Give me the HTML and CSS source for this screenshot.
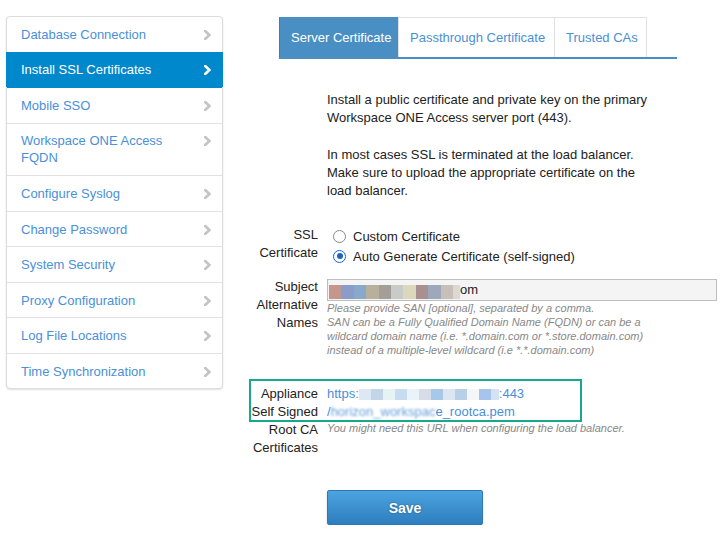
FILE: index.html
```html
<!DOCTYPE html>
<html lang="en">
<head>
<meta charset="utf-8">
<title>Install SSL Certificates</title>
<link rel="stylesheet" href="styles.css">
</head>
<body>
<div class="page">
  <nav class="sidebar">
    <a class="nav-item"><span class="nav-text">Database Connection</span><svg class="chev" viewBox="0 0 7 10"><polyline points="1.2,1 5.4,5 1.2,9"/></svg></a>
    <a class="nav-item active"><span class="nav-text">Install SSL Certificates</span><svg class="chev" viewBox="0 0 7 10"><polyline points="1.2,1 5.4,5 1.2,9"/></svg></a>
    <a class="nav-item"><span class="nav-text">Mobile SSO</span><svg class="chev" viewBox="0 0 7 10"><polyline points="1.2,1 5.4,5 1.2,9"/></svg></a>
    <a class="nav-item"><span class="nav-text">Workspace ONE Access<br>FQDN</span><svg class="chev" viewBox="0 0 7 10"><polyline points="1.2,1 5.4,5 1.2,9"/></svg></a>
    <a class="nav-item"><span class="nav-text">Configure Syslog</span><svg class="chev" viewBox="0 0 7 10"><polyline points="1.2,1 5.4,5 1.2,9"/></svg></a>
    <a class="nav-item"><span class="nav-text">Change Password</span><svg class="chev" viewBox="0 0 7 10"><polyline points="1.2,1 5.4,5 1.2,9"/></svg></a>
    <a class="nav-item"><span class="nav-text">System Security</span><svg class="chev" viewBox="0 0 7 10"><polyline points="1.2,1 5.4,5 1.2,9"/></svg></a>
    <a class="nav-item"><span class="nav-text">Proxy Configuration</span><svg class="chev" viewBox="0 0 7 10"><polyline points="1.2,1 5.4,5 1.2,9"/></svg></a>
    <a class="nav-item"><span class="nav-text">Log File Locations</span><svg class="chev" viewBox="0 0 7 10"><polyline points="1.2,1 5.4,5 1.2,9"/></svg></a>
    <a class="nav-item"><span class="nav-text">Time Synchronization</span><svg class="chev" viewBox="0 0 7 10"><polyline points="1.2,1 5.4,5 1.2,9"/></svg></a>
  </nav>

  <main class="main">
    <div class="tabs">
      <a class="tab tab-server active">Server Certificate</a>
      <a class="tab tab-pass">Passthrough Certificate</a>
      <a class="tab tab-trusted">Trusted CAs</a>
    </div>

    <div class="intro">
      <p>Install a public certificate and private key on the primary<br>Workspace ONE Access server port (443).</p>
      <p>In most cases SSL is terminated at the load balancer.<br>Make sure to upload the appropriate certificate on the<br>load balancer.</p>
    </div>

    <div class="form-row row-ssl">
      <div class="label">SSL<br>Certificate</div>
      <div class="value">
        <div class="radio-line"><span class="radio"></span>Custom Certificate</div>
        <div class="radio-line"><span class="radio checked"></span>Auto Generate Certificate (self-signed)</div>
      </div>
    </div>

    <div class="form-row row-san">
      <div class="label">Subject<br>Alternative<br>Names</div>
      <div class="value">
        <div class="text-input">
          <span class="mosaic m-san"><i class="c1"></i><i class="c2"></i><i class="c3"></i><i class="c4"></i><i class="c5"></i><i class="c6"></i><i class="c7"></i><i class="c8"></i><i class="c9"></i><i class="c10"></i><i class="c11"></i></span><span class="input-text">om</span>
        </div>
        <div class="help">Please provide SAN [optional], separated by a comma.<br>SAN can be a Fully Qualified Domain Name (FQDN) or can be a<br>wildcard domain name (i.e. *.domain.com or *.store.domain.com)<br>instead of a multiple-level wildcard (i.e *.*.domain.com)</div>
      </div>
    </div>

    <div class="form-row row-ca">
      <div class="label">Appliance<br>Self Signed<br>Root CA<br>Certificates</div>
      <div class="value">
        <a class="link">https:<span class="mosaic m-url"><i class="u1"></i><i class="u2"></i><i class="u3"></i><i class="u4"></i><i class="u5"></i><i class="u6"></i><i class="u7"></i><i class="u8"></i><i class="u9"></i><i class="u10"></i><i class="u11"></i><i class="u12"></i></span>:443</a>
        <a class="link">/<span class="blurred">horizon_workspac</span>e_rootca.pem</a>
        <div class="help">You might need this URL when configuring the load balancer.</div>
      </div>
      <div class="highlight"></div>
    </div>

    <div class="actions">
      <button class="btn-save" type="button">Save</button>
    </div>
  </main>
</div>
</body>
</html>
```

FILE: styles.css
```css
* { box-sizing: border-box; }

html, body {
  margin: 0;
  padding: 0;
  background: #fff;
}

body {
  font-family: "Liberation Sans", Arial, sans-serif;
  font-size: 13px;
  color: #333;
}

.page {
  display: flex;
  align-items: flex-start;
  padding: 16px 0 0 6px;
}

/* ---------- sidebar ---------- */
.sidebar {
  width: 217px;
  flex: none;
  display: flex;
  flex-direction: column;
  border: 1px solid #dcdcdc;
  border-radius: 4px;
  background: #fff;
  box-shadow: 0 1px 2px rgba(0, 0, 0, 0.12);
}

.nav-item {
  display: flex;
  justify-content: space-between;
  align-items: flex-start;
  padding: 8.85px 11px 8.7px 14px;
  line-height: 17px;
  color: #4a90d9;
  text-decoration: none;
  border-top: 1px solid #e2e2e2;
}

.nav-item:first-child {
  border-top: 0;
}

.nav-item.active {
  background: #0088cc;
  color: #fff;
  border-top-color: #0088cc;
  margin: 0 -1px;
  padding-left: 15px;
  padding-right: 12px;
  position: relative;
}

.nav-item.active + .nav-item {
  border-top-color: #0088cc;
}

.nav-text {
  flex: 1;
  white-space: nowrap;
}

.chev {
  flex: none;
  width: 7px;
  height: 10px;
  margin-top: 4px;
}

.chev polyline {
  fill: none;
  stroke: #c4c4c4;
  stroke-width: 2.6;
  stroke-linecap: square;
}

.nav-item.active .chev polyline {
  stroke: #fff;
}

/* ---------- main ---------- */
.main {
  margin-left: 26px;
  padding-top: 1px;
}

.tabs {
  display: flex;
  width: 398px;
  margin-left: 30px;
  border-bottom: 2px solid #4a8fc4;
}

.tab {
  height: 40px;
  display: flex;
  align-items: center;
  padding-left: 11px;
  color: #4a8fd6;
  border: 1px solid #e0e0e0;
  border-bottom: 0;
  border-right: 0;
  white-space: nowrap;
}

.tab-server { width: 119px; }
.tab-pass { width: 156px; }
.tab-trusted { width: 93px; border-right: 1px solid #e0e0e0; }

.tab.active {
  background: #4a8fc4;
  color: #fff;
  border-color: #4a8fc4;
  border-left-color: #3b7cb1;
}

.intro {
  margin: 32px 0 0 78px;
  line-height: 18px;
  color: #222;
}

.intro p {
  margin: 0;
  white-space: nowrap;
}

.intro p + p {
  margin-top: 19px;
}

/* ---------- form rows ---------- */
.form-row {
  display: grid;
  grid-template-columns: 69px 390px;
  column-gap: 9px;
}

.label {
  text-align: right;
  line-height: 18px;
  color: #222;
  white-space: nowrap;
}

.row-ssl { margin-top: 26px; }
.row-san { margin-top: 12px; }
.row-ca { margin-top: 28px; position: relative; }

.radio-line {
  display: flex;
  align-items: center;
  height: 20px;
  color: #222;
  white-space: nowrap;
}

.radio {
  width: 13px;
  height: 13px;
  margin: 0 7px 0 6px;
  border-radius: 50%;
  border: 1.5px solid #8a8a8a;
  background: #fff;
  display: flex;
  align-items: center;
  justify-content: center;
}

.radio.checked {
  border-color: #1d62c4;
}

.radio.checked::after {
  content: "";
  width: 6px;
  height: 6px;
  border-radius: 50%;
  background: #1d62c4;
}

.text-input {
  margin-top: 1px;
  height: 22px;
  border: 1px solid #bdbdbd;
  background: #f4f4f4;
  padding: 0 1px;
  display: flex;
  align-items: center;
  color: #222;
}

.mosaic {
  display: inline-flex;
}

.mosaic i {
  display: block;
  width: 12px;
}

.m-san {
  margin-top: 3px;
}

.m-san i {
  height: 14px;
  width: 12.4px;
}

.c1 { background: #c4968c; }
.c2 { background: #8c9cc8; }
.c3 { background: #88a8cc; }
.c4 { background: #b8b09c; }
.c5 { background: #a49e98; }
.c6 { background: #c8ccc8; }
.c7 { background: #dcd8bc; }
.c8 { background: #a89090; }
.c9 { background: #9ea8bc; }
.c10 { background: #c8c0b8; }
.c11 { background: #dcd8d4; width: 7px !important; }

.input-text {
  line-height: 18px;
}

.help {
  font-size: 11px;
  font-style: italic;
  line-height: 14px;
  color: #888;
  white-space: nowrap;
}

.link {
  display: block;
  line-height: 18px;
  color: #4a8fd6;
  text-decoration: none;
  white-space: nowrap;
}

.m-url {
  vertical-align: -2px;
}

.m-url i {
  height: 11px;
}

.u1 { background: #dce9f5; }
.u2 { background: #c5d5e8; }
.u3 { background: #e6f3f3; }
.u4 { background: #c8dcef; }
.u5 { background: #e8f3fa; }
.u6 { background: #d6dde8; }
.u7 { background: #a8c8e8; }
.u8 { background: #dce6f2; }
.u9 { background: #b8cfe8; }
.u10 { background: #f4f6f8; }
.u11 { background: #a6c4ec; }
.u12 { background: #d4e2f4; width: 8px !important; }

.blurred {
  filter: blur(1px);
  opacity: 0.85;
}

.highlight {
  position: absolute;
  left: 0;
  top: -6px;
  width: 333px;
  height: 43px;
  border: 2px solid #17a98b;
  pointer-events: none;
}

/* ---------- actions ---------- */
.actions {
  margin: 33px 0 0 78px;
}

.btn-save {
  width: 156px;
  height: 35px;
  border: 1px solid #2f78b5;
  border-radius: 2px;
  background: linear-gradient(#4ba4df, #2d7ebe);
  box-shadow: 0 1px 2px rgba(0, 0, 0, 0.2);
  color: #fff;
  font-family: "Liberation Sans", Arial, sans-serif;
  font-size: 14px;
  font-weight: bold;
  text-shadow: 0 0 2px rgba(0, 0, 0, 0.45);
  padding: 0;
}
```
